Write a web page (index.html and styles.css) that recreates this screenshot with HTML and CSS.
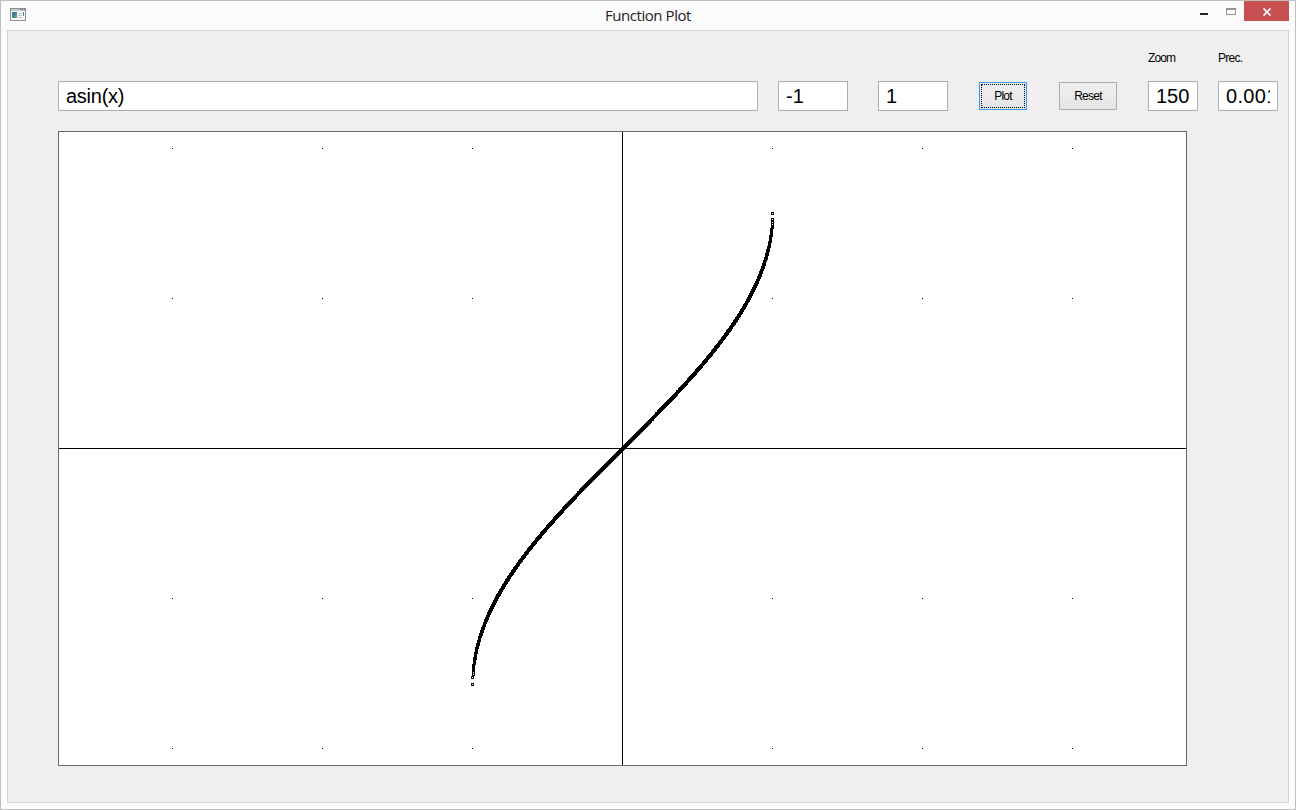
FILE: index.html
```html
<!DOCTYPE html>
<html lang="en">
<head>
<meta charset="utf-8">
<title>Function Plot</title>
<link rel="stylesheet" href="styles.css">
</head>
<body>
<div class="window">
  <header class="titlebar">
    <svg class="app-icon" width="16" height="13" viewBox="0 0 16 13" shape-rendering="crispEdges">
      <defs><linearGradient id="tile" x1="0" y1="0" x2="1" y2="1"><stop offset="0" stop-color="#3566a5"/><stop offset="1" stop-color="#55b27b"/></linearGradient></defs>
      <rect x=".5" y=".5" width="15" height="12" fill="#f8f8f8" stroke="#8a9095"/>
      <path d="M1 1h14v2H1z" fill="#c3c9cf"/>
      <path d="M10 1h1v1h-1zM12 1h1v1h-1zM14 1h1v1h-1z" fill="#59616c"/>
      <path d="M2 4h5v6H2z" fill="url(#tile)"/>
      <path d="M8 5h4v1H8zM8 7h4v1H8zM8 9h4v1H8z" fill="#c8c8c8"/>
      <path d="M13 4h1v4h-1z" fill="url(#tile)"/>
    </svg>
    <span class="title">Function Plot</span>
    <div class="controls">
      <svg width="40" height="20" viewBox="0 0 40 20" shape-rendering="crispEdges"><path d="M0 12h8v2H0z" fill="#222"/><path d="M26.5 7.5h9v6h-9zM27 8.5h8" fill="none" stroke="#929292"/></svg>
      <div class="close"><svg width="10" height="8" viewBox="0 0 10 8"><path d="M1.5 .5L8.5 7.5M8.5 .5L1.5 7.5" stroke="#fff" stroke-width="1.7"/></svg></div>
    </div>
  </header>
  <main class="client">
    <div class="toolbar">
      <div class="field expression"><span>asin(x)</span></div>
      <div class="field bound"><span>-1</span></div>
      <div class="field bound"><span>1</span></div>
      <div class="button plot-button"><span>Plot</span></div>
      <div class="button reset-button"><span>Reset</span></div>
      <div class="labelled zoom"><label>Zoom</label><div class="field"><span>150</span></div></div>
      <div class="labelled prec"><label>Prec.</label><div class="field"><span>0.001</span></div></div>
    </div>
    <div class="plot">
      <svg width="1127" height="633" viewBox="59 132 1127 633" shape-rendering="crispEdges">
        <path d="M59 448.5H1186M622.5 132V765" stroke="#000"/>
        <path id="grid" fill="#000"/>
        <path id="curve" fill="none" stroke="#000"/>
      </svg>
    </div>
  </main>
</div>
<script src="plot.js"></script>
</body>
</html>
```

FILE: styles.css
```css
* { box-sizing: border-box; }
body { margin: 0; font-family: "Liberation Sans", Arial, sans-serif; color: #000; }
.window { width: 1296px; height: 810px; border: 1px solid #bfbfbf; background: #fbfbfb; padding: 0 6px 6px; display: flex; flex-direction: column; }
.titlebar { height: 29px; display: grid; grid-template-columns: 1fr auto 1fr; align-items: start; }
.app-icon { margin: 7px 0 0 3px; }
.title { font: 15px/29px "Open Sans", sans-serif; color: #222; letter-spacing: -0.45px; white-space: nowrap; }
.controls { display: flex; justify-self: end; gap: 4px; }
.controls svg { display: block; }
.close { width: 45px; height: 20px; background: #c75050; display: flex; align-items: center; justify-content: center; padding-top: 2px; }
.client { flex: 1; border: 1px solid #d5d5d5; background: #efefef; padding: 19px 0 0 50px; }
.toolbar { display: flex; align-items: flex-end; height: 61px; }
.field { height: 30px; border: 1px solid #abadb3; background: #fff; padding: 0 7px; font-size: 20px; line-height: 29px; white-space: nowrap; }
.field span { display: block; overflow: hidden; }
.expression { width: 700px; margin-right: 20px; letter-spacing: -0.25px; }
.bound { width: 70px; margin-right: 30px; }
.button { height: 28px; margin-bottom: 1px; border: 1px solid #acacac; background: linear-gradient(#f0f0f0, #e5e5e5); font-size: 12px; line-height: 26px; display: flex; justify-content: center; letter-spacing: -0.75px; }
.plot-button { width: 48px; margin: 0 32px 1px 1px; border-color: #3399ff; padding: 1px; }
.plot-button span { flex: 1; border: 1px dotted #000; line-height: 22px; text-align: center; }
.reset-button { width: 58px; margin-right: 31px; }
.labelled { display: flex; flex-direction: column; gap: 16px; }
.labelled label { font-size: 12px; line-height: 14px; letter-spacing: -0.9px; }
.prec label { letter-spacing: -0.7px; }
.zoom { width: 50px; margin-right: 20px; }
.prec { width: 60px; }
.prec .field { letter-spacing: 0.3px; }
.plot { width: 1129px; height: 635px; margin-top: 20px; border: 1px solid #696969; background: #fff; }
.plot svg { display: block; }
```

FILE: plot.js
```js
const origin = { x: 622, y: 448 };
const zoom = 150;

let grid = "";
for (let i = -3; i <= 3; i++) {
  for (let j = -2; j <= 2; j++) {
    if (i && j) grid += `M${origin.x + i * zoom} ${origin.y + j * zoom}h1v1h-1z`;
  }
}
document.getElementById("grid").setAttribute("d", grid);

// Each sample is a hollow 3px marker; the end is kept just inside the domain.
const markers = new Set();
for (let k = -1000; k <= 1000; k++) {
  const x = Math.min(k / 1000, 0.99999);
  const px = Math.round(origin.x + 0.25 + x * zoom);
  const py = Math.round(origin.y - Math.asin(x) * zoom);
  markers.add(`M${px - 0.5} ${py - 0.5}h2v2h-2z`);
}
document.getElementById("curve").setAttribute("d", [...markers].join(""));
```
